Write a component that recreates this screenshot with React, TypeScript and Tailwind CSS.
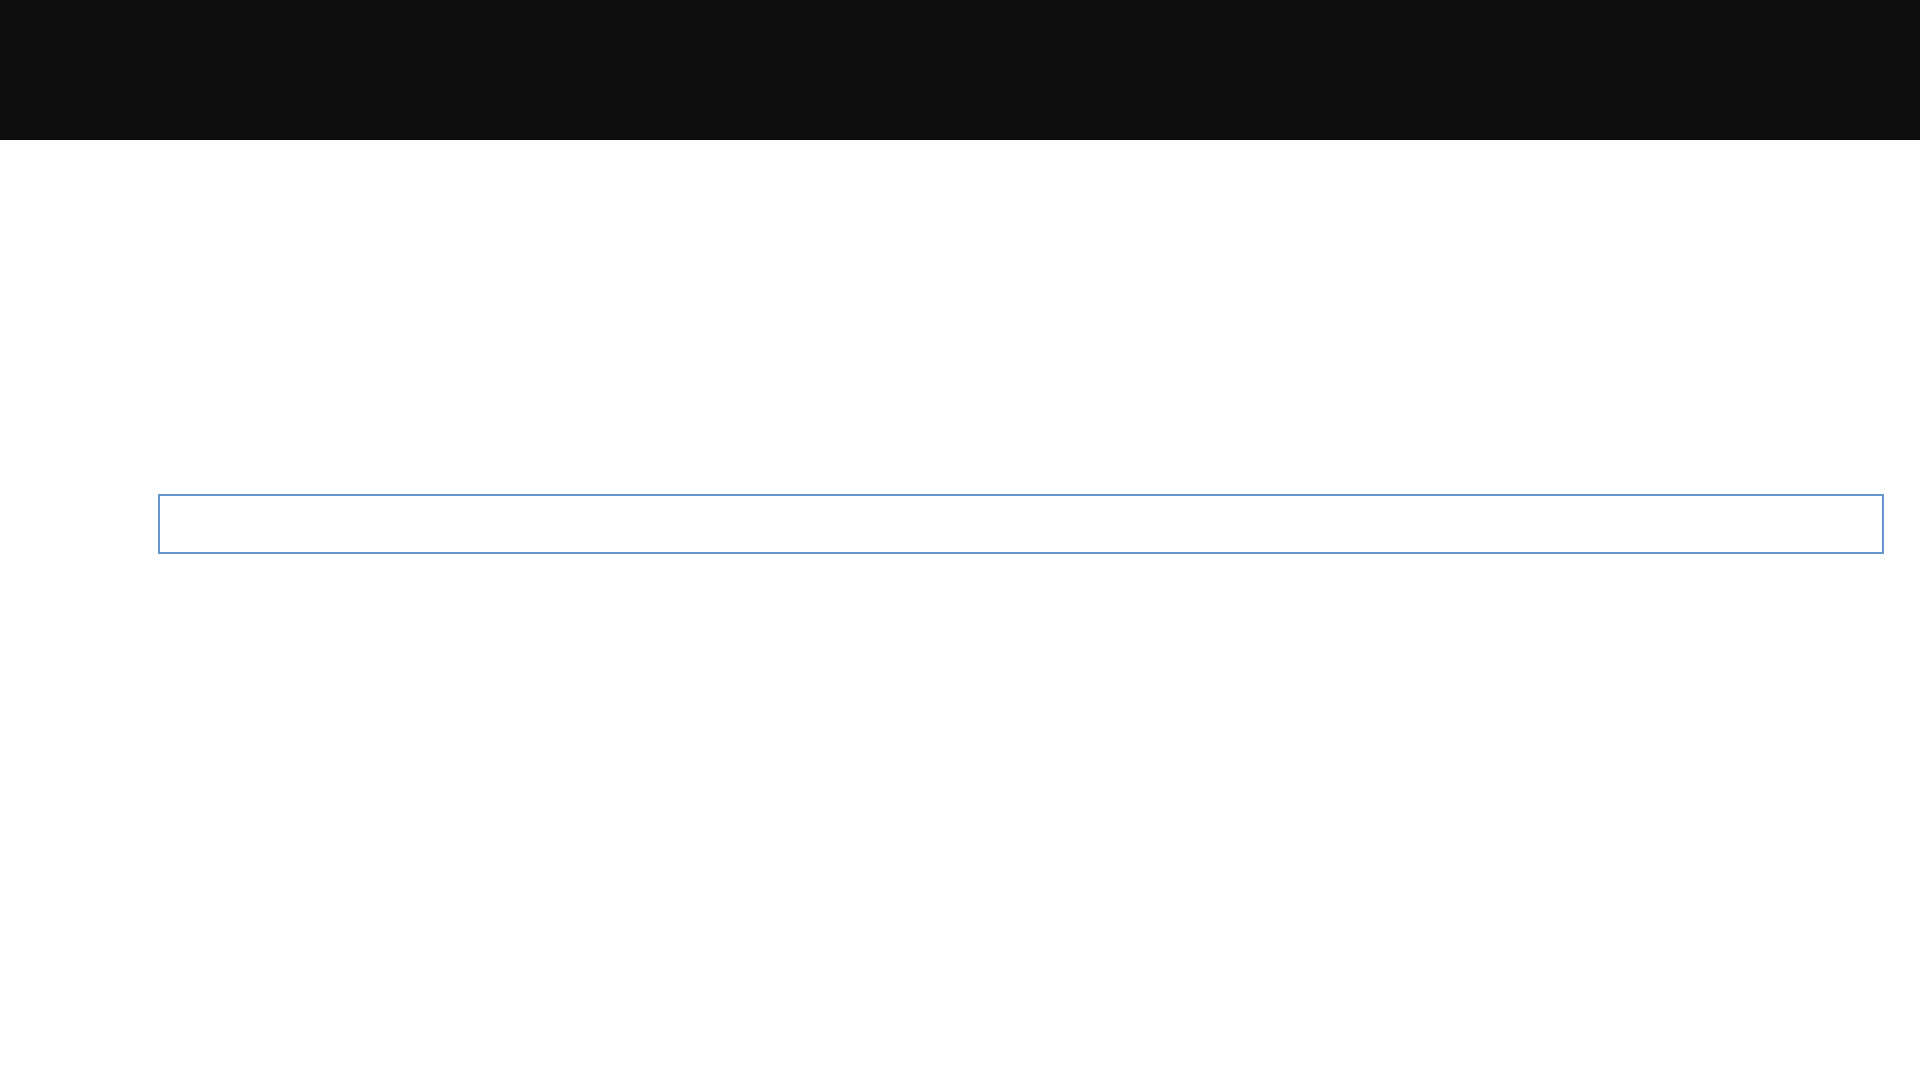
export default function App() {
  return (
    <div className="min-h-screen w-full bg-white" style={{ fontFamily: '"Liberation Sans", Arial, sans-serif' }}>
      <header className="h-[140px] w-full bg-[#0e0e0e]" />
      <main className="pt-[354px] pl-[158px] pr-[36px]">
        <input
          type="text"
          aria-label="search"
          className="block h-[60px] w-full border-2 border-[#6496cd] bg-white px-3 text-base outline-none"
        />
      </main>
    </div>
  );
}
